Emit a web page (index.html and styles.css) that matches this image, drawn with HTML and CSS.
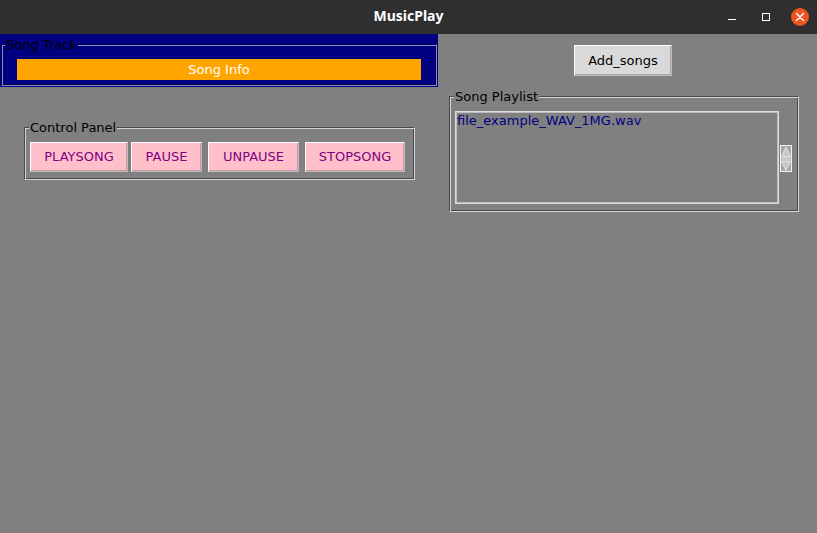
FILE: index.html
```html
<!DOCTYPE html>
<html lang="en">
<head>
<meta charset="utf-8">
<title>MusicPlay</title>
<link rel="stylesheet" href="styles.css">
</head>
<body>
<div class="window">
  <header class="titlebar">
    <div class="titlebar-side"></div>
    <div class="title">MusicPlay</div>
    <div class="controls">
      <svg class="ctl ctl-min" width="8" height="8" viewBox="0 0 8 8"><line x1="0" y1="6.5" x2="8" y2="6.5" stroke="#fff" stroke-width="1"/></svg>
      <svg class="ctl ctl-max" width="8" height="8" viewBox="0 0 8 8"><rect x="0.5" y="0.5" width="7" height="7" fill="none" stroke="#fff" stroke-width="1"/></svg>
      <svg class="ctl ctl-close" width="18" height="18" viewBox="0 0 18 18"><circle cx="9" cy="9" r="9" fill="#e95420"/><path d="M5.5 5.5 L12.5 12.5 M12.5 5.5 L5.5 12.5" stroke="#fff" stroke-width="1.5" stroke-linecap="round"/></svg>
    </div>
  </header>
  <main class="main">
    <section class="left">
      <div class="track-box">
        <fieldset class="frame frame-track">
          <legend class="frame-label">Song Track</legend>
          <div class="song-info">Song Info</div>
        </fieldset>
      </div>
      <fieldset class="frame frame-control">
        <legend class="frame-label">Control Panel</legend>
        <div class="buttons">
          <button class="btn btn-pink btn-play">PLAYSONG</button>
          <button class="btn btn-pink btn-pause">PAUSE</button>
          <button class="btn btn-pink btn-unpause">UNPAUSE</button>
          <button class="btn btn-pink btn-stop">STOPSONG</button>
        </div>
      </fieldset>
    </section>
    <section class="right">
      <button class="btn btn-add">Add_songs</button>
      <fieldset class="frame frame-playlist">
        <legend class="frame-label">Song Playlist</legend>
        <div class="playlist-row">
          <div class="listbox">
            <div class="list-item">file_example_WAV_1MG.wav</div>
          </div>
          <svg class="scrollbar" width="12" height="27" viewBox="0 0 12 27">
            <rect x="0.5" y="0.5" width="11" height="26" fill="#a6a6a6" stroke="#f2f2f2"/>
            <polygon points="6,2 10.5,11.5 1.5,11.5" fill="#c8c8c8" stroke="#ececec" stroke-width="0.8"/>
            <line x1="1.5" y1="13" x2="10.5" y2="13" stroke="#ececec"/>
            <line x1="1.5" y1="15" x2="10.5" y2="15" stroke="#ececec"/>
            <polygon points="1.5,16.5 10.5,16.5 6,25.5" fill="#c8c8c8" stroke="#ececec" stroke-width="0.8"/>
          </svg>
        </div>
      </fieldset>
    </section>
  </main>
</div>
</body>
</html>
```
FILE: styles.css
```css
* { box-sizing: border-box; }
html, body { margin: 0; height: 100%; }
body {
  background: #808080;
  font-family: "DejaVu Sans", sans-serif;
  font-size: 13px;
  color: #000;
}

.titlebar {
  height: 34px;
  background: #2f2f2f;
  display: grid;
  grid-template-columns: 1fr auto 1fr;
  align-items: start;
}
.title {
  font-family: "Noto Sans", sans-serif;
  font-weight: 700;
  font-size: 14px;
  line-height: 32px;
  color: #fff;
}
.controls {
  justify-self: end;
  height: 34px;
  display: flex;
  align-items: center;
  padding-right: 8px;
}
.ctl { display: block; }
.ctl-max { margin-left: 26px; }
.ctl-close { margin-left: 21px; }

.main {
  display: flex;
  align-items: flex-start;
}
.left {
  width: 438px;
  display: flex;
  flex-direction: column;
  align-items: flex-start;
}
.right {
  width: 359px;
  padding: 11px 0 0 11px;
  display: flex;
  flex-direction: column;
  align-items: flex-start;
}

/* Tk-style groove label frames */
.frame {
  margin: 0;
  min-width: 0;
  border: 1px solid;
  border-color: #4a4a4a #d4d4d4 #d4d4d4 #4a4a4a;
  box-shadow: inset 1px 1px 0 #d4d4d4, inset -1px -1px 0 #4a4a4a;
}
.frame-label {
  padding: 0 1px;
  margin-left: -1px;
  height: 15px;
  line-height: 15px;
  background: #808080;
  color: #000;
}

.track-box {
  width: 438px;
  height: 53px;
  background: #000080;
  padding: 3px 1px 1px 1px;
}
.frame-track {
  width: 436px;
  padding: 7px 15px 5px 15px;
  border-color: #00004a #8c8cc8 #8c8cc8 #00004a;
  box-shadow: inset 1px 1px 0 #8c8cc8, inset -1px -1px 0 #00004a;
}
.frame-track .frame-label {
  background: #000080;
  margin-left: -12px;
}
.song-info {
  height: 21px;
  line-height: 21px;
  background: #ffa500;
  color: #fff;
  text-align: center;
}

.frame-control {
  margin: 33px 0 0 24px;
  width: 391px;
  padding: 7px 8px 7px 5px;
}
.buttons {
  display: flex;
  gap: 6px;
}

.btn {
  font-family: "DejaVu Sans", sans-serif;
  font-size: 13px;
  margin: 0;
  padding: 0;
  height: 30px;
  line-height: 28px;
  text-align: center;
  border: 1px solid;
  border-color: #ffffff #bdbdbd #bdbdbd #ffffff;
  white-space: nowrap;
}
.btn-pink {
  background: #ffc0cb;
  color: #800080;
  box-shadow: inset -1px -1px 0 #c79aa3;
}
.btn-play { width: 98px; margin-right: -3px; }
.btn-pause { width: 71px; }
.btn-unpause { width: 91px; }
.btn-stop { width: 100px; }
.btn-add {
  align-self: center;
  width: 98px;
  height: 31px;
  background: #d9d9d9;
  color: #000;
  box-shadow: inset -1px -1px 0 #a8a8a8;
}

.frame-playlist {
  margin-top: 13px;
  width: 350px;
  flex-shrink: 0;
  padding: 7px 5px 7px 5px;
}
.playlist-row {
  display: flex;
  align-items: center;
}
.listbox {
  width: 324px;
  height: 93px;
  border: 1px solid #dcdcdc;
  box-shadow: inset 0 0 0 1px #bdbdbd;
  padding: 1px 1px;
}
.list-item {
  line-height: 15px;
  color: #000080;
}
.scrollbar {
  display: block;
  margin-left: 1px;
  margin-top: 2px;
}
```
